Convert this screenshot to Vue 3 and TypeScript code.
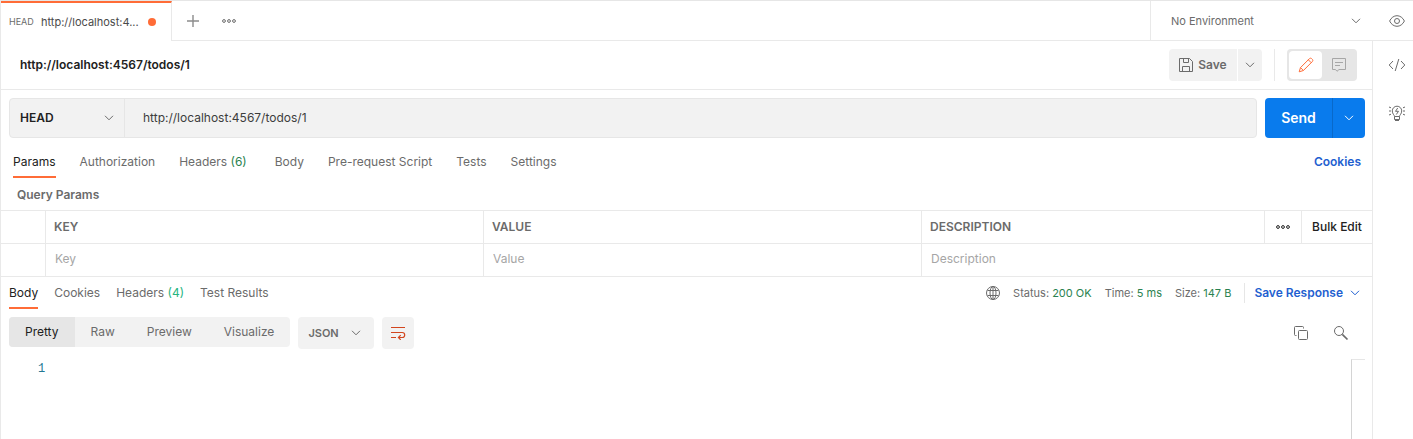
<script setup lang="ts">
import { ref } from 'vue'

interface Tab {
  label: string
  count?: number
}

const url = ref('http://localhost:4567/todos/1')
const method = ref('HEAD')
const environment = ref('No Environment')
const language = ref('JSON')

const requestTabs: Tab[] = [
  { label: 'Params' },
  { label: 'Authorization' },
  { label: 'Headers', count: 6 },
  { label: 'Body' },
  { label: 'Pre-request Script' },
  { label: 'Tests' },
  { label: 'Settings' },
]
const activeRequestTab = ref('Params')

const responseTabs: Tab[] = [
  { label: 'Body' },
  { label: 'Cookies' },
  { label: 'Headers', count: 4 },
  { label: 'Test Results' },
]
const activeResponseTab = ref('Body')

const formats: string[] = ['Pretty', 'Raw', 'Preview', 'Visualize']
const activeFormat = ref('Pretty')

const stats = [
  { name: 'Status:', value: '200 OK' },
  { name: 'Time:', value: '5 ms' },
  { name: 'Size:', value: '147 B' },
]
</script>

<template>
  <div class="app">
    <header class="topbar">
      <div class="open-tab">
        <span class="open-method">HEAD</span>
        <span class="open-url">http://localhost:4...</span>
        <span class="unsaved"></span>
      </div>
      <div class="tab-actions">
        <button class="icon-btn" aria-label="New tab">
          <svg width="12" height="12" viewBox="0 0 12 12"><path d="M6 0v12M0 6h12" stroke="#8c8c8c" stroke-width="1.4" fill="none" /></svg>
        </button>
        <button class="icon-btn" aria-label="Tab options">
          <svg width="14" height="4" viewBox="0 0 14 4" fill="none" stroke="#6b6b6b"><circle cx="2" cy="2" r="1.4" /><circle cx="7" cy="2" r="1.4" /><circle cx="12" cy="2" r="1.4" /></svg>
        </button>
      </div>
      <div class="environment">
        <select v-model="environment" class="env-select" aria-label="Environment">
          <option>No Environment</option>
        </select>
        <svg class="chevron" width="10" height="6" viewBox="0 0 10 6"><path d="M1 .8l4 4 4-4" /></svg>
      </div>
      <button class="icon-btn quick-look" aria-label="Environment quick look">
        <svg width="16" height="12" viewBox="0 0 16 12" fill="none" stroke="#6b6b6b"><path d="M.6 6C2.2 2.600 5 .7 8 .7S13.800 2.600 15.400 6C13.800 9.400 11 11.300 8 11.300S2.200 9.400.6 6z" /><circle cx="8" cy="6" r="2.500" /></svg>
      </button>
    </header>

    <div class="workspace">
      <main class="main">
        <div class="title-row">
          <h1 class="title">http://localhost:4567/todos/1</h1>
          <button class="save">
            <svg width="14" height="14" viewBox="0 0 14 14" fill="none" stroke="#6b6b6b"><path d="M.5.5h10l3 3v10H.5zM3.500 13.500v-5h7v5M4.500.5v4h5v-4" /></svg>
            Save
          </button>
          <button class="save-more" aria-label="Save options">
            <svg class="chevron" width="10" height="6" viewBox="0 0 10 6"><path d="M1 .8l4 4 4-4" /></svg>
          </button>
          <span class="divider"></span>
          <div class="mode">
            <button class="mode-btn on" aria-label="Edit">
              <svg width="16" height="16" viewBox="0 0 16 16" fill="none" stroke="#ff6c37" stroke-linejoin="round"><path d="M1.200 14.800l1.300-4.200 8.900-8.900c.7-.7 1.600-.7 2.200-.1l.8.8c.6.6.6 1.500-.1 2.200l-8.900 8.900zM2.500 10.600l2.900 2.900M10.300 2.800l2.900 2.900" /></svg>
            </button>
            <button class="mode-btn" aria-label="Comments">
              <svg width="14" height="14" viewBox="0 0 14 14" fill="none" stroke="#a6a6a6"><path d="M.5.5h13v11H7L5 13.300l-1.500-1.800h-3zM3 4.500h8M3 7.500h5" /></svg>
            </button>
          </div>
        </div>

        <div class="request-row">
          <div class="address">
            <div class="method">
              <select v-model="method" class="method-select" aria-label="Method">
                <option>HEAD</option>
                <option>GET</option>
                <option>POST</option>
              </select>
              <svg class="chevron" width="10" height="6" viewBox="0 0 10 6"><path d="M1 .8l4 4 4-4" /></svg>
            </div>
            <input v-model="url" class="url" type="text" aria-label="Request URL" />
          </div>
          <div class="send-group">
            <button class="send">Send</button>
            <button class="send-more" aria-label="Send options">
              <svg class="chevron" width="10" height="6" viewBox="0 0 10 6"><path d="M1 .8l4 4 4-4" /></svg>
            </button>
          </div>
        </div>

        <nav class="request-tabs">
          <button
            v-for="tab in requestTabs"
            :key="tab.label"
            class="tab"
            :class="{ active: tab.label === activeRequestTab }"
            @click="activeRequestTab = tab.label"
          >{{ tab.label }}<span v-if="tab.count" class="count">&nbsp;({{ tab.count }})</span></button>
          <a class="cookies" href="#">Cookies</a>
        </nav>

        <h2 class="section-title">Query Params</h2>
        <table class="params">
          <colgroup>
            <col class="c-check" />
            <col />
            <col />
            <col class="c-desc" />
            <col class="c-more" />
            <col class="c-bulk" />
          </colgroup>
          <thead>
            <tr>
              <th></th>
              <th>KEY</th>
              <th>VALUE</th>
              <th>DESCRIPTION</th>
              <th class="tool">
                <button class="icon-btn column-options" aria-label="Column options">
                  <svg width="14" height="4" viewBox="0 0 14 4" fill="none" stroke="#212121"><circle cx="2" cy="2" r="1.400" /><circle cx="7" cy="2" r="1.400" /><circle cx="12" cy="2" r="1.400" /></svg>
                </button>
              </th>
              <th class="tool"><button class="bulk">Bulk Edit</button></th>
            </tr>
          </thead>
          <tbody>
            <tr>
              <td></td>
              <td><input class="cell" type="text" placeholder="Key" aria-label="Key" /></td>
              <td><input class="cell" type="text" placeholder="Value" aria-label="Value" /></td>
              <td colspan="3"><input class="cell" type="text" placeholder="Description" aria-label="Description" /></td>
            </tr>
          </tbody>
        </table>

        <div class="response-head">
          <nav class="response-tabs">
            <button
              v-for="tab in responseTabs"
              :key="tab.label"
              class="tab"
              :class="{ active: tab.label === activeResponseTab }"
              @click="activeResponseTab = tab.label"
            >{{ tab.label }}<span v-if="tab.count" class="count bright">&nbsp;({{ tab.count }})</span></button>
          </nav>
          <div class="stats">
            <svg width="14" height="14" viewBox="0 0 14 14" fill="none" stroke="#6b6b6b"><circle cx="7" cy="7" r="6.500" /><ellipse cx="7" cy="7" rx="3" ry="6.500" /><path d="M1.500 4.500h11M1.500 9.500h11M7 .5v13" /></svg>
            <span v-for="stat in stats" :key="stat.name" class="stat">{{ stat.name }} <span class="stat-value">{{ stat.value }}</span></span>
          </div>
          <button class="save-response">
            Save Response
            <svg class="chevron" width="10" height="6" viewBox="0 0 10 6"><path d="M1 .8l4 4 4-4" /></svg>
          </button>
        </div>

        <div class="viewer-bar">
          <div class="formats">
            <button
              v-for="format in formats"
              :key="format"
              class="format"
              :class="{ chosen: format === activeFormat }"
              @click="activeFormat = format"
            >{{ format }}</button>
          </div>
          <div class="language">
            <select v-model="language" class="language-select" aria-label="Language">
              <option>JSON</option>
              <option>XML</option>
            </select>
            <svg class="chevron" width="10" height="6" viewBox="0 0 10 6"><path d="M1 .8l4 4 4-4" /></svg>
          </div>
          <button class="wrap" aria-label="Wrap lines">
            <svg width="16" height="14" viewBox="0 0 16 14" fill="none" stroke="#d2451e" stroke-width="1.200"><path d="M1 1.500h14M1 6.500h11.200a2.500 2.500 0 0 1 0 5H8.500M1 11.500h5M10.700 9.200l-2.300 2.300 2.300 2.300" /></svg>
          </button>
          <div class="viewer-tools">
            <button class="icon-btn" aria-label="Copy">
              <svg width="16" height="16" viewBox="0 0 16 16" fill="none" stroke="#6b6b6b"><path d="M3.500 10.500h-1a1 1 0 0 1-1-1v-7a1 1 0 0 1 1-1h7a1 1 0 0 1 1 1v1" /><rect x="5.500" y="5.500" width="9" height="9" rx="1" /></svg>
            </button>
            <button class="icon-btn" aria-label="Search">
              <svg width="16" height="16" viewBox="0 0 16 16" fill="none" stroke="#6b6b6b"><circle cx="6" cy="6" r="4.500" /><path d="M9.300 9.300l5.200 5.200" stroke-width="1.700" /></svg>
            </button>
          </div>
        </div>

        <div class="code">
          <span class="line-number">1</span>
          <div class="minimap"></div>
        </div>
      </main>

      <aside class="rail">
        <button class="icon-btn" aria-label="Code">
          <svg width="18" height="14" viewBox="0 0 18 14" fill="none" stroke="#6b6b6b"><path d="M5 3L1.200 7 5 11M13 3l3.800 4L13 11M10.800 1L7.200 13" /></svg>
        </button>
        <button class="icon-btn" aria-label="Info">
          <svg width="18" height="18" viewBox="0 0 18 18" fill="none" stroke="#6b6b6b"><path d="M6.500 12.500c0-1.500-2.200-2.500-2.200-5.600a4.700 4.700 0 0 1 9.400 0c0 3.100-2.200 4.100-2.200 5.600zM6.500 12.500v3h5v-3M7 16.500h4M9.700 4L7.500 7.300h3L8.300 10.500M1 3l2 .8M1 7h2M1 11l2-.8M17 3l-2 .8M17 7h-2M17 11l-2-.8" /></svg>
        </button>
      </aside>
    </div>
  </div>
</template>

<style>
body {
  background: #fff;
}
</style>

<style scoped>
.app {
  display: flex;
  flex-direction: column;
  box-sizing: border-box;
  min-height: 100vh;
  border-left: 1px solid #e9e9e9;
  font-family: Inter, 'Liberation Sans', sans-serif;
  font-size: 12px;
  line-height: 16px;
  color: #6b6b6b;
}
.app *,
.app *::before {
  box-sizing: border-box;
}
button,
input,
select {
  margin: 0;
  padding: 0;
  border: 0;
  background: none;
  font: inherit;
  color: inherit;
  outline: 0;
  appearance: none;
}
button,
select {
  cursor: pointer;
}
svg {
  display: block;
  flex: none;
}
.chevron {
  fill: none;
  stroke: #6b6b6b;
  stroke-width: 1;
  pointer-events: none;
}
.icon-btn {
  display: inline-flex;
  align-items: center;
  justify-content: center;
}

/* Top bar */
.topbar {
  display: flex;
  height: 41px;
  border-top: 1px solid #e6e6e6;
}
.open-tab {
  display: flex;
  align-items: center;
  flex: none;
  width: 171px;
  padding: 0 8px;
  border-top: 2px solid #ff6c37;
  border-right: 1px solid #e9e9e9;
}
.open-method {
  width: 32px;
  font-size: 9px;
}
.open-url {
  flex: none;
  width: 107px;
  font-size: 11px;
  color: #4a4a4a;
}
.unsaved {
  width: 8px;
  height: 8px;
  border-radius: 50%;
  background: #ff6c37;
}
.tab-actions {
  display: flex;
  flex: 1;
  align-items: center;
  gap: 23px;
  padding-left: 15px;
  border-bottom: 1px solid #e9e9e9;
}
.environment {
  display: flex;
  align-items: center;
  width: 222px;
  padding: 0 11px 0 20px;
  border-left: 1px solid #e9e9e9;
  border-bottom: 1px solid #e9e9e9;
}
.env-select {
  flex: 1;
  font-size: 11px;
}
.quick-look {
  width: 41px;
  padding-left: 8px;
  border-bottom: 1px solid #e9e9e9;
}

/* Layout below the top bar */
.workspace {
  display: flex;
  flex: 1;
}
.main {
  display: flex;
  flex: 1;
  flex-direction: column;
  min-width: 0;
}
.rail {
  display: flex;
  flex-direction: column;
  align-items: center;
  gap: 32px;
  width: 41px;
  padding: 17px 0 0 7px;
  border-left: 1px solid #e9e9e9;
}

/* Title row */
.title-row {
  display: flex;
  align-items: center;
  height: 49px;
  padding: 0 15px 0 19px;
  border-bottom: 1px solid #e9e9e9;
}
.title {
  flex: 1;
  margin: 0;
  font-size: 12px;
  font-weight: 600;
  color: #212121;
}
.save {
  display: flex;
  align-items: center;
  justify-content: center;
  gap: 5px;
  width: 68px;
  height: 32px;
  margin-right: 1px;
  border-radius: 4px 0 0 4px;
  background: #f2f2f2;
  font-weight: 600;
}
.save-more {
  display: flex;
  align-items: center;
  justify-content: center;
  width: 24px;
  height: 32px;
  border-radius: 0 4px 4px 0;
  background: #f2f2f2;
}
.divider {
  width: 1px;
  height: 32px;
  margin: 0 12px;
  background: #e9e9e9;
}
.mode {
  display: flex;
  padding: 2px;
  border-radius: 4px;
  background: #e6e6e6;
}
.mode-btn {
  display: flex;
  align-items: center;
  justify-content: center;
  width: 33px;
  height: 28px;
  border-radius: 4px;
}
.mode-btn.on {
  background: #fff;
}

/* Request row */
.request-row {
  display: flex;
  gap: 8px;
  padding: 8px 7px 0 8px;
}
.address {
  display: flex;
  flex: 1;
  height: 40px;
  border: 1px solid #e6e6e6;
  border-radius: 4px;
  background: #f2f2f2;
}
.method {
  display: flex;
  align-items: center;
  width: 115px;
  padding: 0 10px;
  border-right: 1px solid #e6e6e6;
}
.method-select {
  flex: 1;
  font-weight: 600;
  color: #212121;
}
.url {
  flex: 1;
  padding: 0 18px;
  color: #3d3d3d;
}
.send-group {
  display: flex;
  width: 100px;
  border-radius: 4px;
  background: #097bed;
  color: #fff;
}
.send {
  flex: 1;
  font-size: 14px;
  font-weight: 600;
}
.send-more {
  display: flex;
  align-items: center;
  justify-content: center;
  width: 33px;
  border-left: 1px solid #0869ca;
}
.send-more .chevron {
  stroke: #fff;
}

/* Tabs */
.request-tabs {
  display: flex;
  gap: 24px;
  height: 40px;
  padding: 0 11px 0 12px;
}
.tab {
  padding-top: 2px;
  border-bottom: 2px solid transparent;
}
.tab.active {
  border-bottom-color: #ff6c37;
  color: #212121;
}
.request-tabs .tab {
  padding-top: 9px;
}
.count {
  color: #2a8250;
}
.request-tabs .count {
  padding-right: 4px;
}
.count.bright {
  color: #26b47f;
}
.cookies {
  margin-left: auto;
  padding-top: 16px;
  font-weight: 600;
  color: #1f5fd0;
  text-decoration: none;
}

/* Query params */
.section-title {
  margin: 0;
  padding: 9px 16px 7px;
  font-size: 12px;
  font-weight: 600;
}
.params {
  width: 100%;
  table-layout: fixed;
  border-collapse: separate;
  border-spacing: 0;
  border-top: 1px solid #e9e9e9;
}
.c-check {
  width: 45px;
}
.c-desc {
  width: 343px;
}
.c-more {
  width: 37px;
}
.c-bulk {
  width: 70px;
}
.params th,
.params td {
  height: 33px;
  padding: 0 8px;
  border-right: 1px solid #e9e9e9;
  border-bottom: 1px solid #e9e9e9;
  text-align: left;
  font-weight: 600;
}
.params td {
  padding: 0 9px 2px;
  font-weight: 400;
}
.params tr > :last-child {
  border-right: 0;
}
.params .tool {
  padding: 0;
  text-align: center;
  vertical-align: middle;
}
.column-options {
  display: flex;
  width: 100%;
}
.bulk {
  color: #212121;
  font-weight: 500;
}
.cell {
  display: block;
  width: 100%;
}
.cell::placeholder {
  color: #a6a6a6;
  opacity: 1;
}

/* Response */
.response-head {
  display: flex;
  align-items: center;
  height: 32px;
  padding: 0 12px 0 8px;
}
.response-tabs {
  display: flex;
  flex: 1;
  gap: 16px;
  height: 32px;
}
.stats {
  display: flex;
  align-items: center;
  gap: 13px;
  padding-right: 13px;
  font-size: 11px;
}
.stat-value {
  color: #2a8250;
}
.save-response {
  display: flex;
  align-items: center;
  gap: 7px;
  height: 20px;
  padding-left: 9px;
  border-left: 1px solid #e6e6e6;
  font-weight: 600;
  color: #1f5fd0;
}
.save-response .chevron {
  stroke: #1f5fd0;
}
.viewer-bar {
  display: flex;
  align-items: flex-start;
  gap: 8px;
  padding: 8px 23px 0 8px;
}
.formats {
  display: flex;
  height: 30px;
  overflow: hidden;
  border-radius: 4px;
  background: #f2f2f2;
}
.format {
  padding: 0 16px;
}
.format.chosen {
  background: #e6e6e6;
  color: #212121;
}
.language {
  display: flex;
  align-items: center;
  width: 76px;
  height: 32px;
  padding: 0 13px 0 10px;
  border-radius: 4px;
  background: #f2f2f2;
}
.language-select {
  flex: 1;
  font-size: 11px;
  font-weight: 600;
}
.wrap {
  display: flex;
  align-items: center;
  justify-content: center;
  width: 32px;
  height: 32px;
  border-radius: 4px;
  background: #f2f2f2;
}
.viewer-tools {
  display: flex;
  align-items: center;
  gap: 24px;
  height: 32px;
  margin-left: auto;
}
.code {
  display: flex;
  flex: 1;
  justify-content: space-between;
  padding: 10px 7px 0 37px;
}
.line-number {
  padding-top: 2px;
  font-family: 'Liberation Mono', monospace;
  font-size: 12px;
  color: #237893;
}
.minimap {
  width: 14px;
  border-top: 1px solid #e6e6e6;
  border-left: 1px solid #d4d4d4;
}
</style>
